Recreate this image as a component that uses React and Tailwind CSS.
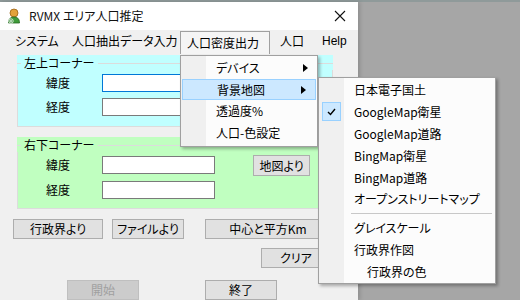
import React from 'react';

const font = "font-['Noto_Sans_CJK_JP','Noto_Sans',sans-serif] [font-feature-settings:'palt']";

const AppIcon = () => (
  <svg width="14" height="16" viewBox="0 0 14 16">
    <circle cx="7" cy="5" r="4" fill="#e3a23a" stroke="#9a6214" strokeWidth="0.8" />
    <path d="M1.5 15 C1.5 10.5 4 9 7 9 C10 9 12.5 10.5 12.5 15 Z" fill="#3f9b3a" stroke="#24691f" strokeWidth="0.8" />
    <circle cx="4" cy="13" r="2.2" fill="#2e8b2e" stroke="#fff" strokeWidth="0.8" />
    <path d="M4 11.8 V14.2 M2.8 13 H5.2" stroke="#fff" strokeWidth="0.8" />
  </svg>
);

const Arrow = () => (
  <svg width="5" height="8" viewBox="0 0 5 8" className="ml-auto mr-[9px]">
    <path d="M0 0 L5 4 L0 8 Z" fill="#000" />
  </svg>
);

const Btn = ({ children, className = '', disabled }) => (
  <div
    className={`h-[20px] flex items-center justify-center border text-[12px] ${disabled ? 'text-[#a0a0a0] bg-[#cccccc] border-[#bfbfbf]' : 'text-black bg-[#e1e1e1] border-[#adadad]'} ${className}`}
  >
    {children}
  </div>
);

const Field = ({ label, focused }) => (
  <div className="flex items-center h-[18px]">
    <span className="w-[84px] pl-[28px] text-[12px] leading-none">{label}</span>
    <div className={`w-[113px] h-[18px] bg-white border ${focused ? 'border-[#0078d7]' : 'border-[#7a7a7a]'}`} />
  </div>
);

const GroupBox = ({ title, bg, children }) => (
  <div className={`ml-[4px] w-[316px] ${bg} flex flex-col`}>
    <div className="flex items-center h-[14px] mt-[1px]">
      <div className="w-[4px] h-px bg-[#dcdcdc]" />
      <span className="px-[3px] text-[12px] leading-none">{title}</span>
      <div className="flex-1 h-px bg-[#dcdcdc]" />
    </div>
    <div className="flex-1 border-l border-r border-b border-[#dcdcdc] border-t-0">{children}</div>
  </div>
);

const menuBg = 'bg-[linear-gradient(to_right,#f0f0f0_25px,#fcfcfc_25px)]';

export default function App() {
  return (
    <div className={`relative w-[520px] h-[300px] overflow-hidden bg-[#a6a6a6] ${font} text-black`}>
      <div className="h-[2px] bg-[#8f9a9a]" />
      <div className="w-[358px] h-[298px] bg-[#f0f0f0] flex flex-col shadow-[2px_0_4px_rgba(0,0,0,0.15)]">
        {/* title bar */}
        <div className="h-[30px] bg-white flex items-center pl-[7px] pr-[9px]">
          <AppIcon />
          <span className="ml-[8px] text-[12px] text-[#111]">RVMX エリア人口推定</span>
          <svg width="12" height="12" viewBox="0 0 12 12" className="ml-auto mr-[3px]">
            <path d="M1 1 L11 11 M11 1 L1 11" stroke="#111" strokeWidth="1.1" />
          </svg>
        </div>

        {/* menu bar */}
        <div className="h-[21px] flex items-start pl-[8px] text-[12px]">
          <div className="w-[57px] h-[21px] pl-[7px] flex items-center">システム</div>
          <div className="w-[115px] h-[21px] pl-[7px] flex items-center">人口抽出データ入力</div>
          <div className="relative z-30 w-[90px] h-[23px] mt-px pl-[6px] flex items-center border border-b-0 border-[#a0a0a0] bg-[#f5f5f5]">
            人口密度出力
          </div>
          <div className="ml-[3px] w-[42px] h-[21px] pl-[7px] flex items-center">人口</div>
          <div className="w-[40px] h-[21px] pl-[7px] flex items-center font-['Liberation_Sans',sans-serif]">Help</div>
        </div>

        {/* body */}
        <div className="flex flex-col pl-[13px] pt-[4px]">
          <GroupBox title="左上コーナー" bg="bg-[#c0ffff]">
            <div className="flex flex-col gap-[6px] pt-[4px] pb-[10px]">
              <Field label="緯度" focused />
              <Field label="経度" />
            </div>
          </GroupBox>

          <div className="mt-[10px]">
            <GroupBox title="右下コーナー" bg="bg-[#c0ffc0]">
              <div className="flex pt-[3px] pb-[9px]">
                <div className="flex flex-col gap-[7px] pt-[1px]">
                  <Field label="緯度" />
                  <Field label="経度" />
                </div>
                <Btn className="ml-[38px] w-[57px] h-[21px]">地図より</Btn>
              </div>
            </GroupBox>
          </div>

          <div className="flex mt-[10px]">
            <Btn className="w-[90px]">行政界より</Btn>
            <Btn className="ml-[9px] w-[72px]">ファイルより</Btn>
            <Btn className="ml-[21px] w-[126px]">中心と平方Km</Btn>
          </div>
          <div className="flex mt-[9px]">
            <Btn className="ml-[248px] w-[70px]">クリア</Btn>
          </div>
          <div className="flex mt-[12px]">
            <Btn className="ml-[54px] w-[72px]" disabled>開始</Btn>
            <Btn className="ml-[66px] w-[72px]">終了</Btn>
          </div>
        </div>
      </div>

      {/* dropdown menu */}
      <div className={`absolute left-[180px] top-[55px] z-20 w-[138px] h-[92px] ${menuBg} border border-[#a0a0a0] shadow-[2px_2px_3px_rgba(0,0,0,0.3)] flex flex-col pt-px text-[12px]`}>
        <div className="h-[22px] flex items-center pl-[35px]">デバイス<Arrow /></div>
        <div className="h-[21px] mx-px flex items-center pl-[34px] bg-[#cce8ff] border border-[#99d1ff]">背景地図<Arrow /></div>
        <div className="h-[22px] flex items-center pl-[35px]">透過度%</div>
        <div className="h-[22px] flex items-center pl-[35px]">人口-色設定</div>
      </div>

      {/* submenu */}
      <div className={`absolute left-[318px] top-[77px] z-20 w-[178px] h-[207px] ${menuBg} border border-[#a0a0a0] shadow-[2px_2px_3px_rgba(0,0,0,0.3)] flex flex-col pt-px text-[12px]`}>
        <div className="h-[22px] flex items-center pl-[35px]">日本電子国土</div>
        <div className="h-[22px] flex items-center">
          <div className="ml-[3px] w-[19px] h-[19px] flex items-center justify-center bg-[#cce8ff] border border-[#99d1ff]">
            <svg width="9" height="8" viewBox="0 0 9 8">
              <path d="M1 4 L3.5 6.5 L8 1" stroke="#000" strokeWidth="1.4" fill="none" />
            </svg>
          </div>
          <span className="ml-[13px]">GoogleMap衛星</span>
        </div>
        <div className="h-[22px] flex items-center pl-[35px]">GoogleMap道路</div>
        <div className="h-[22px] flex items-center pl-[35px]">BingMap衛星</div>
        <div className="h-[22px] flex items-center pl-[35px]">BingMap道路</div>
        <div className="h-[22px] flex items-center pl-[35px]">オープンストリートマップ</div>
        <div className="h-[7px] flex items-center pl-[32px] pr-[3px]">
          <div className="flex-1 h-px bg-[#c8c8c8]" />
        </div>
        <div className="h-[22px] flex items-center pl-[35px]">グレイスケール</div>
        <div className="h-[22px] flex items-center pl-[35px]">行政界作図</div>
        <div className="h-[22px] flex items-center pl-[48px]">行政界の色</div>
      </div>
    </div>
  );
}
